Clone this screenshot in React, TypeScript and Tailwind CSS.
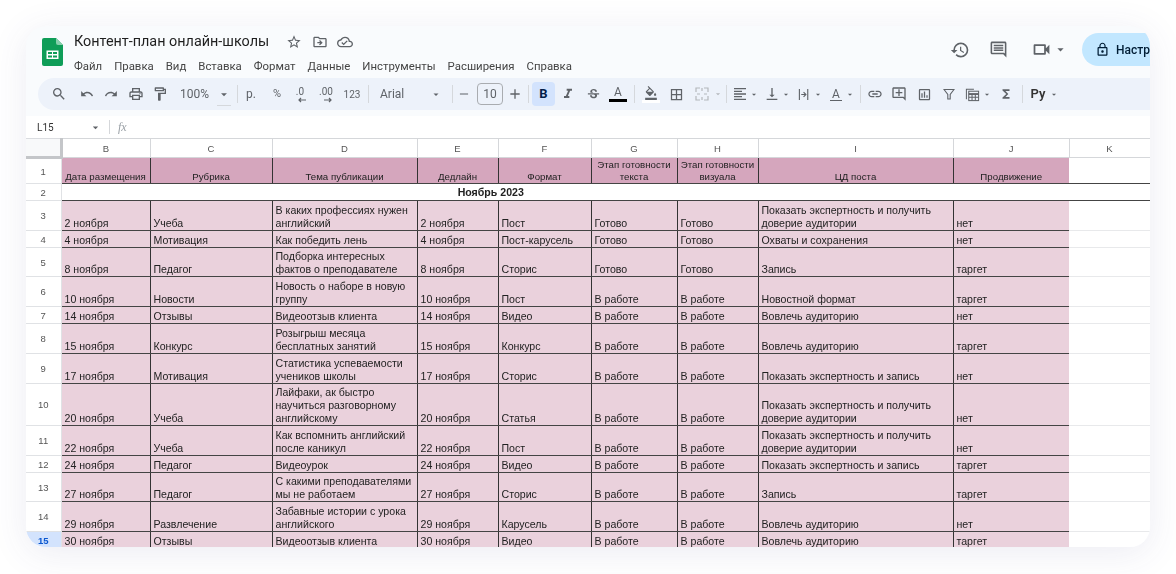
import {
  MdSearch, MdUndo, MdRedo, MdOutlinePrint, MdOutlineFormatPaint, MdStarBorder, MdOutlineDriveFileMove,
  MdOutlineCloudDone, MdHistory, MdOutlineComment, MdOutlineVideocam, MdLockOutline, MdFormatItalic,
  MdStrikethroughS, MdFormatColorFill, MdBorderAll, MdFormatAlignLeft, MdVerticalAlignBottom,
  MdLink, MdOutlineAddComment, MdOutlineInsertChart, MdFunctions, MdArrowDropDown, MdAdd, MdRemove,
} from 'react-icons/md';
import type { ReactNode } from 'react';

const menu = ['Файл', 'Правка', 'Вид', 'Вставка', 'Формат', 'Данные', 'Инструменты', 'Расширения', 'Справка'];

const columns = [
  { letter: 'B', w: 'w-[89px]' },
  { letter: 'C', w: 'w-[122px]' },
  { letter: 'D', w: 'w-[145px]' },
  { letter: 'E', w: 'w-[81px]' },
  { letter: 'F', w: 'w-[93px]' },
  { letter: 'G', w: 'w-[86px]' },
  { letter: 'H', w: 'w-[81px]' },
  { letter: 'I', w: 'w-[195px]' },
  { letter: 'J', w: 'w-[116px]' },
  { letter: 'K', w: 'w-[81px]' },
];

const headers = [
  'Дата размещения', 'Рубрика', 'Тема публикации', 'Дедлайн', 'Формат',
  'Этап готовности\nтекста', 'Этап готовности\nвизуала', 'ЦД поста', 'Продвижение',
];

const expert = 'Показать экспертность и получить\nдоверие аудитории';

const rows = [
  { n: 3, h: 'h-[30px]', cells: ['2 ноября', 'Учеба', 'В каких профессиях нужен\nанглийский', '2 ноября', 'Пост', 'Готово', 'Готово', expert, 'нет'] },
  { n: 4, h: 'h-[17px]', cells: ['4 ноября', 'Мотивация', 'Как победить лень', '4 ноября', 'Пост-карусель', 'Готово', 'Готово', 'Охваты и сохранения', 'нет'] },
  { n: 5, h: 'h-[29px]', cells: ['8 ноября', 'Педагог', 'Подборка интересных\nфактов о преподавателе', '8 ноября', 'Сторис', 'Готово', 'Готово', 'Запись', 'таргет'] },
  { n: 6, h: 'h-[30px]', cells: ['10 ноября', 'Новости', 'Новость о наборе в новую\nгруппу', '10 ноября', 'Пост', 'В работе', 'В работе', 'Новостной формат', 'таргет'] },
  { n: 7, h: 'h-[17px]', cells: ['14 ноября', 'Отзывы', 'Видеоотзыв клиента', '14 ноября', 'Видео', 'В работе', 'В работе', 'Вовлечь аудиторию', 'нет'] },
  { n: 8, h: 'h-[30px]', cells: ['15 ноября', 'Конкурс', 'Розыгрыш месяца\nбесплатных занятий', '15 ноября', 'Конкурс', 'В работе', 'В работе', 'Вовлечь аудиторию', 'таргет'] },
  { n: 9, h: 'h-[30px]', cells: ['17 ноября', 'Мотивация', 'Статистика успеваемости\nучеников школы', '17 ноября', 'Сторис', 'В работе', 'В работе', 'Показать экспертность и запись', 'нет'] },
  { n: 10, h: 'h-[42px]', cells: ['20 ноября', 'Учеба', 'Лайфаки, ак быстро\nнаучиться разговорному\nанглийскому', '20 ноября', 'Статья', 'В работе', 'В работе', expert, 'нет'] },
  { n: 11, h: 'h-[30px]', cells: ['22 ноября', 'Учеба', 'Как вспомнить английский\nпосле каникул', '22 ноября', 'Пост', 'В работе', 'В работе', expert, 'нет'] },
  { n: 12, h: 'h-[17px]', cells: ['24 ноября', 'Педагог', 'Видеоурок', '24 ноября', 'Видео', 'В работе', 'В работе', 'Показать экспертность и запись', 'таргет'] },
  { n: 13, h: 'h-[29px]', cells: ['27 ноября', 'Педагог', 'С какими преподавателями\nмы не работаем', '27 ноября', 'Сторис', 'В работе', 'В работе', 'Запись', 'таргет'] },
  { n: 14, h: 'h-[30px]', cells: ['29 ноября', 'Развлечение', 'Забавные истории с урока\nанглийского', '29 ноября', 'Карусель', 'В работе', 'В работе', 'Вовлечь аудиторию', 'нет'] },
  { n: 15, h: 'h-[17px]', cells: ['30 ноября', 'Отзывы', 'Видеоотзыв клиента', '30 ноября', 'Видео', 'В работе', 'В работе', 'Вовлечь аудиторию', 'таргет'] },
];

function Tool({ className = 'w-[22px]', children }: { className?: string; children: ReactNode }) {
  return <div className={`flex h-[24px] shrink-0 items-center justify-center text-[#5f6368] ${className}`}>{children}</div>;
}

function Sep({ className }: { className: string }) {
  return <div className={`h-[18px] w-px shrink-0 bg-[#d5d8dc] ${className}`} />;
}

function Caret({ className }: { className: string }) {
  return (
    <Tool className={className}>
      <MdArrowDropDown size={15} />
    </Tool>
  );
}

function SheetsLogo() {
  return (
    <svg width="21" height="28" viewBox="0 0 21 28" className="shrink-0">
      <path d="M2 0h12l7 7v19a2 2 0 0 1-2 2H2a2 2 0 0 1-2-2V2a2 2 0 0 1 2-2z" fill="#0f9d58" />
      <path d="M14 0l7 7h-5a2 2 0 0 1-2-2z" fill="#87ceac" />
      <path d="M4.5 12.5h12v8.5h-12z M6 14v2h4v-2z M11 14v2h4v-2z M6 17.5v2h4v-2z M11 17.5v2h4v-2z" fill="#fff" fillRule="evenodd" />
    </svg>
  );
}

function DecimalIcon({ label, dir }: { label: string; dir: 'left' | 'right' }) {
  return (
    <div className="relative h-[18px] w-[20px] text-center text-[10px] leading-[13px]">
      {label}
      <svg width="10" height="6" viewBox="0 0 10 6" className="absolute bottom-0 left-[7px]">
        {dir === 'left' ? (
          <path d="M9 3H2M4 1L2 3l2 2" fill="none" stroke="#5f6368" strokeWidth="1.2" />
        ) : (
          <path d="M1 3h7M6 1l2 2-2 2" fill="none" stroke="#5f6368" strokeWidth="1.2" />
        )}
      </svg>
    </div>
  );
}

function Toolbar() {
  return (
    <div className="ml-[12px] flex h-[32px] items-center rounded-l-full bg-[#edf2fa] pl-[10px] font-['Roboto',sans-serif] text-[12px] text-[#5f6368]">
      <Tool><MdSearch size={16} /></Tool>
      <Tool className="ml-[6px] w-[22px]"><MdUndo size={14} /></Tool>
      <Tool className="ml-[2px] w-[22px]"><MdRedo size={14} /></Tool>
      <Tool className="ml-[3px] w-[22px]"><MdOutlinePrint size={16} /></Tool>
      <Tool className="ml-[2px] w-[22px]"><MdOutlineFormatPaint size={16} /></Tool>
      <div className="ml-[9px] w-[30px] shrink-0 text-[12px]">100%</div>
      <div className="ml-[7px] h-[24px] w-[14px] shrink-0 border-b border-[#d5d8dc]">
        <div className="flex h-[24px] items-center justify-center"><MdArrowDropDown size={15} /></div>
      </div>
      <Sep className="ml-[6px]" />
      <Tool className="ml-[2px] w-[22px]">р.</Tool>
      <Tool className="ml-[4px] w-[22px] text-[11px]">%</Tool>
      <Tool className="ml-[1px] w-[22px]"><DecimalIcon label=".0" dir="left" /></Tool>
      <Tool className="ml-[4px] w-[22px]"><DecimalIcon label=".00" dir="right" /></Tool>
      <Tool className="ml-[4px] w-[22px] text-[10px]">123</Tool>
      <Sep className="ml-[5px]" />
      <div className="ml-[11px] w-[50px] shrink-0">Arial</div>
      <Caret className="w-[12px]" />
      <Sep className="ml-[10px]" />
      <Tool className="ml-[4px] w-[14px]"><MdRemove size={14} /></Tool>
      <div className="ml-[6px] flex h-[22px] w-[26px] shrink-0 items-center justify-center rounded-[4px] border border-[#a9acb0] text-[12px]">10</div>
      <Tool className="ml-[4px] w-[16px]"><MdAdd size={16} /></Tool>
      <Sep className="ml-[5px]" />
      <div className="ml-[3px] flex h-[24px] w-[23px] shrink-0 items-center justify-center rounded-[4px] bg-[#d3e3fd] text-[13px] font-bold text-[#041e49]">B</div>
      <Tool className="ml-[2px] w-[22px]"><MdFormatItalic size={16} /></Tool>
      <Tool className="ml-[3px] w-[22px]"><MdStrikethroughS size={15} /></Tool>
      <Tool className="ml-[3px] w-[22px]">
        <div className="flex w-[18px] flex-col items-center text-[12px] leading-[13px]">
          A
          <div className="h-[3px] w-[18px] bg-black" />
        </div>
      </Tool>
      <Sep className="ml-[5px]" />
      <Tool className="ml-[5px] w-[22px]">
        <div className="flex w-[18px] flex-col items-center">
          <MdFormatColorFill size={14} />
          <div className="h-[3px] w-[18px] bg-white" />
        </div>
      </Tool>
      <Tool className="ml-[3px] w-[22px]"><MdBorderAll size={15} /></Tool>
      <Tool className="ml-[4px] w-[22px]">
        <svg width="14" height="14" viewBox="0 0 14 14" fill="none" stroke="#b4b7bb" strokeWidth="1.2">
          <path d="M1 5V1h4M9 1h4v4M1 9v4h4M9 13h4V9M7 1v3M7 10v3M2 7h3M9 7h3" />
        </svg>
      </Tool>
      <Tool className="w-[10px] text-[#b4b7bb]"><MdArrowDropDown size={14} /></Tool>
      <Sep className="ml-[3px]" />
      <Tool className="ml-[4px] w-[18px]"><MdFormatAlignLeft size={16} /></Tool>
      <Caret className="w-[10px]" />
      <Tool className="ml-[4px] w-[18px]"><MdVerticalAlignBottom size={16} /></Tool>
      <Caret className="w-[10px]" />
      <Tool className="ml-[4px] w-[18px]">
        <svg width="13" height="13" viewBox="0 0 14 14" fill="none" stroke="#5f6368" strokeWidth="1.2">
          <path d="M1.5 1v12M10.5 1v12M3.5 7h5M6 4.5L8.5 7 6 9.5" />
        </svg>
      </Tool>
      <Caret className="w-[10px]" />
      <Tool className="ml-[4px] w-[18px]">
        <div className="flex w-[12px] flex-col items-center text-[12px] leading-[12px]">
          A
          <div className="h-px w-[12px] bg-[#5f6368]" />
        </div>
      </Tool>
      <Caret className="w-[10px]" />
      <Sep className="ml-[5px]" />
      <Tool className="ml-[3px] w-[22px]"><MdLink size={16} /></Tool>
      <Tool className="ml-[2px] w-[22px]"><MdOutlineAddComment size={16} /></Tool>
      <Tool className="ml-[3px] w-[22px]"><MdOutlineInsertChart size={15} /></Tool>
      <Tool className="ml-[3px] w-[22px]">
        <svg width="12" height="12" viewBox="0 0 12 12" fill="none" stroke="#5f6368" strokeWidth="1.1">
          <path d="M1 1.5h10L7.2 6.5V11H4.8V6.5z" />
        </svg>
      </Tool>
      <Tool className="ml-[3px] w-[18px]">
        <svg width="15" height="15" viewBox="0 0 16 16" fill="none" stroke="#5f6368" strokeWidth="1.1">
          <path d="M1.5 13V2.5h8" />
          <rect x="4" y="4.5" width="10.5" height="10" />
          <path d="M4 7.5h10.5" strokeWidth="2" />
          <path d="M7.5 8v6.5M11 8v6.5M4 11h10.5" />
        </svg>
      </Tool>
      <Caret className="ml-px w-[10px]" />
      <Tool className="ml-[5px] w-[18px]"><MdFunctions size={14} /></Tool>
      <Sep className="ml-[7px]" />
      <div className="ml-[5px] w-[20px] shrink-0 text-center text-[13px] font-semibold text-[#333]">Ру</div>
      <Caret className="ml-px w-[10px]" />
    </div>
  );
}

export default function App() {
  return (
    <div className="h-[574px] w-[1176px] overflow-hidden bg-white pl-[26px] pt-[26px]">
      <div className="h-[521px] w-[1124px] overflow-hidden rounded-[20px] bg-[#f9fbfd] shadow-[0_6px_36px_rgba(70,70,140,0.10)] blur-[0.4px]">
        {/* Title bar */}
        <div className="flex h-[52px] items-start">
          <div className="ml-[16px] mt-[12px]"><SheetsLogo /></div>
          <div className="ml-[11px] font-['Roboto',sans-serif]">
            <div className="mt-[6px] flex h-[20px] items-center text-[#1f1f1f]">
              <span className="w-[195px] whitespace-nowrap text-[14.4px]">Контент-план онлайн-школы</span>
              <span className="ml-[17px] text-[#5f6368]"><MdStarBorder size={16} /></span>
              <span className="ml-[10px] text-[#5f6368]"><MdOutlineDriveFileMove size={16} /></span>
              <span className="ml-[9px] text-[#5f6368]"><MdOutlineCloudDone size={16} /></span>
            </div>
            <div className="mt-[6px] flex gap-[12px] text-[11.4px] leading-[16px] text-[#444]">
              {menu.map(item => <span key={item}>{item}</span>)}
            </div>
          </div>
          <div className="ml-auto mt-[7px] flex w-[205px] items-center overflow-hidden text-[#5f6368]">
            <div className="ml-[5px]"><MdHistory size={20} /></div>
            <div className="ml-[19px]"><MdOutlineComment size={19} /></div>
            <div className="ml-[23px]"><MdOutlineVideocam size={21} /></div>
            <div className="ml-px"><MdArrowDropDown size={15} /></div>
            <div className="ml-[14px] flex h-[33px] w-[130px] shrink-0 items-center rounded-l-full bg-[#c2e7ff] pl-[13px] font-['Roboto',sans-serif] text-[12px] font-medium text-[#001d35]">
              <MdLockOutline size={15} className="shrink-0" />
              <span className="ml-[6px] whitespace-nowrap">Настройки Доступа</span>
            </div>
          </div>
        </div>

        <Toolbar />

        {/* Formula bar */}
        <div className="mt-[6px] flex h-[22px] items-center bg-white font-['Roboto',sans-serif] text-[#5f6368]">
          <span className="ml-[11px] w-[52px] text-[10px] text-[#333]">L15</span>
          <MdArrowDropDown size={13} />
          <div className="ml-[7px] h-[14px] w-px bg-[#d5d7da]" />
          <span className="ml-[8px] font-['Liberation_Serif',serif] text-[12px] italic text-[#9aa0a6]">fx</span>
        </div>

        {/* Sheet */}
        <table className="w-[1124px] table-fixed bg-white font-['Liberation_Sans',Arial,sans-serif] text-[10.6px] leading-[13px] text-[#222]">
          <colgroup>
            <col className="w-[35px]" />
            {columns.map(col => <col key={col.letter} className={col.w} />)}
          </colgroup>
          <tbody>
            <tr className="h-[19px] text-[9.5px] text-[#555]">
              <th className="border-t border-r-[3px] border-b-[3px] border-t-[#dadce0] border-r-[#c4c6c9] border-b-[#c4c6c9] bg-[#f8f9fa]" />
              {columns.map(col => (
                <th key={col.letter} className="border-t border-r border-b border-[#d5d7da] font-normal">{col.letter}</th>
              ))}
            </tr>
            <tr className="h-[26px]">
              <td className="border-r border-b border-[#e0e2e5] text-center text-[9.5px] text-[#555]">1</td>
              {headers.map((text, i) => (
                <td
                  key={text}
                  className={`border-b border-b-[#444] bg-[#d5a6bd] text-center align-bottom text-[9.7px] leading-[12px] whitespace-pre ${i < 8 ? 'border-r border-r-[#333]' : ''}`}
                >
                  {text}
                </td>
              ))}
              <td className="border-b border-b-[#444]" />
            </tr>
            <tr className="h-[17px]">
              <td className="border-r border-b border-[#e0e2e5] text-center text-[9.5px] text-[#555]">2</td>
              <td colSpan={10} className="border-b border-b-[#444] pr-[230px] text-center font-bold">Ноябрь 2023</td>
            </tr>
            {rows.map(row => (
              <tr key={row.n} className={row.h}>
                {row.n === 15 ? (
                  <td className="border-r border-[#e0e2e5] bg-[#d3e3fd] text-center text-[9.5px] font-bold text-[#0b57d0]">15</td>
                ) : (
                  <td className="border-r border-b border-[#e0e2e5] text-center text-[9.5px] text-[#555]">{row.n}</td>
                )}
                {row.cells.map((text, i) => (
                  <td
                    key={i}
                    className={`border-b border-b-[#444] bg-[#ead1dc] pl-[3px] align-bottom whitespace-pre ${i < 8 ? 'border-r border-r-[#333]' : ''}`}
                  >
                    {text}
                  </td>
                ))}
                <td className="border-b border-[#e8e9eb]" />
              </tr>
            ))}
          </tbody>
        </table>
      </div>
    </div>
  );
}
